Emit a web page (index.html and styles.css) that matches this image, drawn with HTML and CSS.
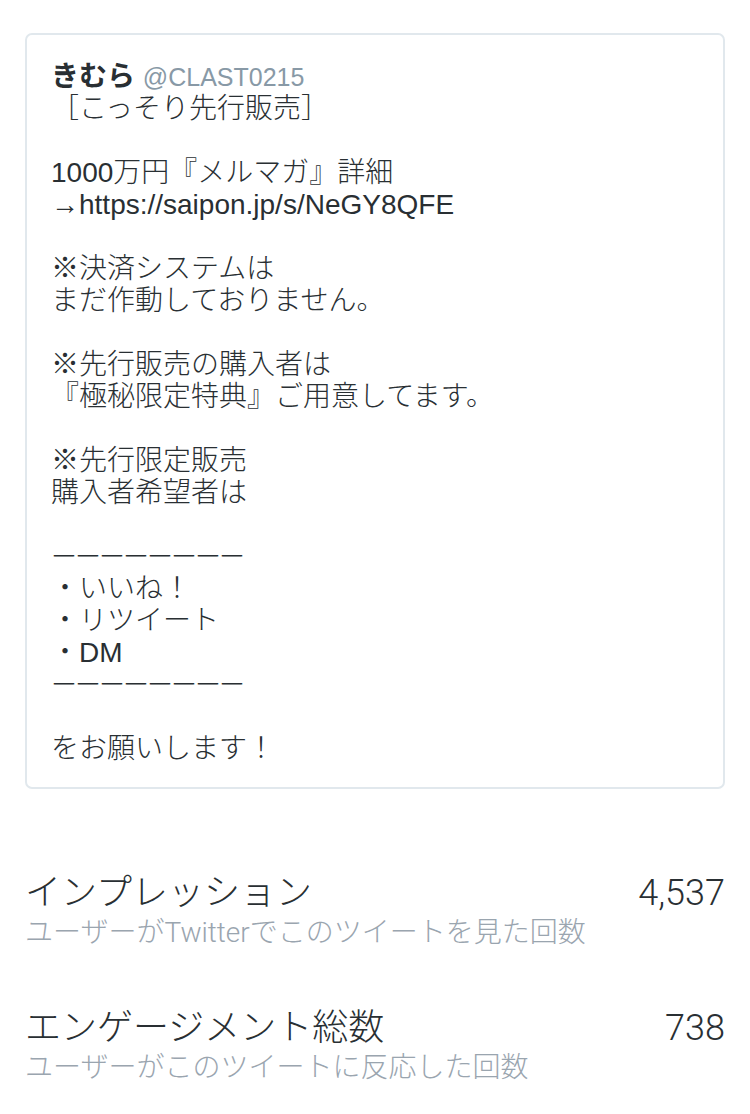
FILE: index.html
```html
<!DOCTYPE html>
<html lang="ja">
<head>
    <meta charset="UTF-8">
    <meta name="viewport" content="width=device-width, initial-scale=1.0">
    <title>ツイートアクティビティ</title>
    <link rel="stylesheet" href="styles.css">
</head>
<body>
    <div class="tweet-card">
        <p class="tweet-text"><span class="name">きむら</span> <span class="handle">@CLAST0215</span>
［こっそり先行販売］

1000万円『メルマガ』詳細
→https://saipon.jp/s/NeGY8QFE

※決済システムは
まだ作動しておりません。

※先行販売の購入者は
『極秘限定特典』ご用意してます。

※先行限定販売
購入者希望者は

<span class="dashes">ーーーーーーーー</span>
・いいね！
・リツイート
・DM
<span class="dashes">ーーーーーーーー</span>

をお願いします！</p>
    </div>

    <div class="stats">
        <div class="stat-row">
            <div class="stat-info">
                <div class="stat-title">インプレッション</div>
                <div class="stat-desc">ユーザーがTwitterでこのツイートを見た回数</div>
            </div>
            <div class="stat-value">4,537</div>
        </div>
        <div class="stat-row">
            <div class="stat-info">
                <div class="stat-title">エンゲージメント総数</div>
                <div class="stat-desc">ユーザーがこのツイートに反応した回数</div>
            </div>
            <div class="stat-value">738</div>
        </div>
    </div>
</body>
</html>
```

FILE: styles.css
```css
body {
    margin: 0;
    font-family: 'Liberation Sans', 'Noto Sans CJK JP', sans-serif;
    font-weight: 300;
    background-color: #ffffff;
    color: #292f33;
}

.tweet-card {
    margin: 33px 25px 0;
    padding: 26px 24px 22px;
    border: 2px solid #e1e8ed;
    border-radius: 7px;
}

.tweet-text {
    margin: 0;
    white-space: pre-wrap;
    font-size: 28px;
    line-height: 32px;
}

.name {
    font-weight: bold;
}

.handle {
    color: #8899a6;
    font-size: 25px;
}

.dashes {
    font-size: 26px;
    letter-spacing: -2px;
}

.stats {
    padding: 84px 25px 0;
    font-family: Roboto, 'Noto Sans CJK JP', sans-serif;
}

.stat-row {
    display: flex;
    justify-content: space-between;
    align-items: flex-start;
    margin-bottom: 55px;
}

.stat-title {
    font-size: 36px;
    line-height: 40px;
}

.stat-desc {
    font-size: 28px;
    line-height: 40px;
    color: #9aa5af;
}

.stat-value {
    font-size: 36px;
    line-height: 40px;
}
```
